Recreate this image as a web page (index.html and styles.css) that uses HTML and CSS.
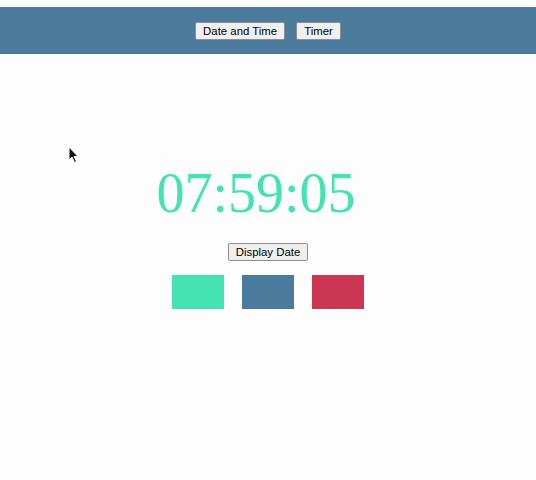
FILE: index.html
```html
<!DOCTYPE html>
<html>
<head>
<meta charset="utf-8">
<link rel="stylesheet" href="styles.css">
</head>
<body>
<div class="page">
  <header class="nav">
    <button class="btn">Date and Time</button>
    <button class="btn">Timer</button>
  </header>
  <main class="main">
    <div class="clock">07:59:05</div>
    <button class="btn display-btn">Display Date</button>
    <div class="swatches">
      <div class="swatch green"></div>
      <div class="swatch blue"></div>
      <div class="swatch red"></div>
    </div>
  </main>
  <svg class="cursor" width="12" height="18" viewBox="0 0 12 18">
    <path d="M1 1 L1 14 L4 11 L6.5 16.5 L8.5 15.5 L6 10.5 L10 10.5 Z" fill="#111" stroke="#fff" stroke-width="1"/>
  </svg>
</div>
</body>
</html>
```
FILE: styles.css
```css
html, body {
  margin: 0;
  padding: 0;
  background: #fdfdfd;
}
.page {
  position: relative;
  width: 536px;
  height: 480px;
  padding-top: 7px;
  box-sizing: border-box;
  background: #fdfdfd;
}
.nav {
  height: 47px;
  background: #4a7b9d;
  display: flex;
  justify-content: center;
  align-items: flex-start;
  gap: 11px;
  padding-top: 15px;
  box-sizing: border-box;
}
.btn {
  font-family: "Liberation Sans", Arial, sans-serif;
  font-size: 11.4px;
  line-height: 14px;
  padding: 1px 7px;
  background: #efefef;
  border: 1px solid #8f8f8f;
  border-radius: 2px;
  color: #000;
  margin: 0;
}
.main {
  display: flex;
  flex-direction: column;
  align-items: center;
  padding-top: 111px;
}
.clock {
  font-family: "Liberation Serif", "Times New Roman", serif;
  font-size: 56px;
  line-height: 56px;
  color: #45e3b1;
  padding-right: 24px;
}
.display-btn {
  margin-top: 22px;
  padding: 1px 7px;
}
.swatches {
  display: flex;
  gap: 18px;
  margin-top: 14px;
}
.swatch {
  width: 52px;
  height: 34px;
}
.green { background: #45e3b1; }
.blue { background: #4a7b9d; }
.red { background: #cb3652; }
.cursor {
  position: absolute;
  left: 68px;
  top: 146px;
}
```
